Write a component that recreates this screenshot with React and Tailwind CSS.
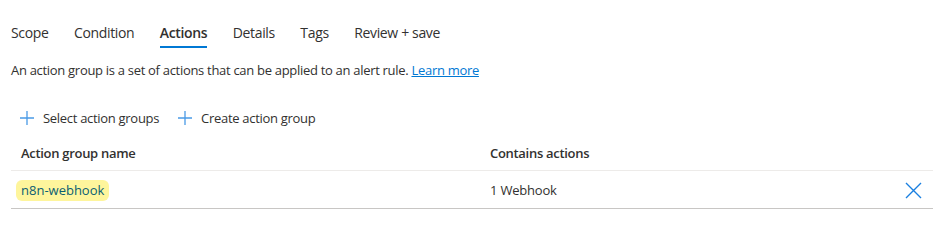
import React from "react";

function Plus() {
  return (
    <svg width="16" height="16" viewBox="0 0 16 16" className="shrink-0">
      <path d="M8 1v14M1 8h14" stroke="#4a9ae6" strokeWidth="1.3" fill="none" />
    </svg>
  );
}

function XIcon() {
  return (
    <svg width="17" height="17" viewBox="0 0 17 17">
      <path d="M1 1l15 15M16 1L1 16" stroke="#1a7fe0" strokeWidth="1.4" fill="none" />
    </svg>
  );
}

export default function App() {
  const tabs = ["Scope", "Condition", "Actions", "Details", "Tags", "Review + save"];
  return (
    <div className="w-[948px] h-[252px] bg-white text-[#323130] font-['Open_Sans','Noto_Sans',sans-serif] overflow-hidden">
      <div className="flex pl-[11px] pt-[22px] gap-[25.5px] h-[49px]">
        {tabs.map((t) => (
          <div
            key={t}
            className={
              "flex flex-col text-[14px] leading-[22px] tracking-[-0.35px] " +
              (t === "Actions" ? "font-semibold" : "")
            }
          >
            <span>{t}</span>
            {t === "Actions" ? <div className="h-[2px] bg-[#0078d4] mt-[2px]" /> : null}
          </div>
        ))}
      </div>
      <div className="pl-[11px] pt-[12px] text-[13px] leading-[18px] tracking-[-0.3px]">
        An action group is a set of actions that can be applied to an alert rule.{" "}
        <a className="text-[#0078d4] underline">Learn more</a>
      </div>
      <div className="flex items-center pl-[19px] pt-[30px] gap-[18px] text-[13px] leading-[18px] tracking-[-0.3px]">
        <div className="flex items-center gap-[8px]">
          <Plus />
          <span>Select action groups</span>
        </div>
        <div className="flex items-center gap-[8px]">
          <Plus />
          <span>Create action group</span>
        </div>
      </div>
      <div className="ml-[11px] w-[922px] mt-[10px]">
        <div className="flex h-[34px] items-center text-[13px] font-semibold tracking-[-0.3px] border-b border-[#edebe9]">
          <div className="w-[479px] pl-[10px]">Action group name</div>
          <div>Contains actions</div>
        </div>
        <div className="flex h-[38px] pt-[2px] items-center text-[13px] tracking-[-0.2px] border-b border-[#c8c6c4]">
          <div className="w-[479px] pl-[5px]">
            <span className="inline-block bg-[#fef59c] text-[#0b5e73] rounded-[6px] px-[5px] leading-[21px] tracking-[0px] text-[13px]">
              n8n-webhook
            </span>
          </div>
          <div className="flex-1">1 Webhook</div>
          <div className="pr-[11px] flex items-center">
            <XIcon />
          </div>
        </div>
      </div>
    </div>
  );
}
